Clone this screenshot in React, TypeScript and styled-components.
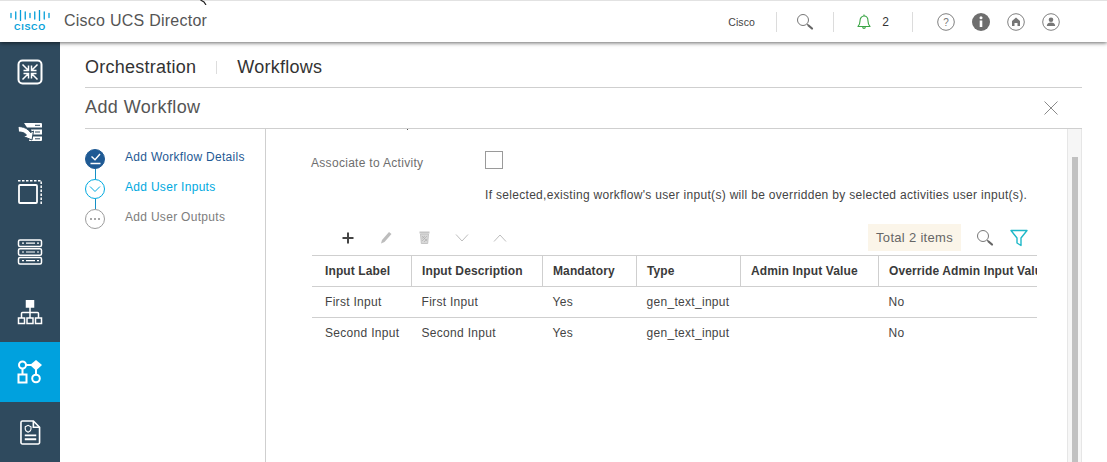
import React from "react";
import styled, { createGlobalStyle } from "styled-components";

const Global = createGlobalStyle`
  html, body { margin: 0; padding: 0; background: #fff; }
  body { font-family: "Liberation Sans", Arial, sans-serif; color: #333; overflow: hidden; }
  * { box-sizing: border-box; }
`;

const Page = styled.div`
  width: 1107px; height: 462px; display: flex; flex-direction: column; overflow: hidden; background: #fff;
`;
const Header = styled.header`
  position: relative; z-index: 2; flex: 0 0 42px; height: 42px; display: flex; align-items: center;
  background: #fff; border-top: 1px solid #e2e2e2; padding: 0 47px 0 10px;
  box-shadow: 0 1px 4px rgba(0,0,0,.6);
`;
const CursorMark = styled.svg`
  position: absolute; left: 200px; top: -1px;
`;
const Logo = styled.div`
  width: 40px; display: flex; flex-direction: column; align-items: center; margin-top: -1px;
`;
const LogoWord = styled.span`
  font: 700 9px/9px "Liberation Sans", Arial, sans-serif; letter-spacing: .7px; color: #049fd9; margin-top: 2px;
`;
const AppName = styled.div`
  margin-left: 14px; font-size: 16px; color: #555; letter-spacing: .25px; flex: 1; margin-top: -2px;
`;
const HeadUser = styled.span`
  font-size: 10.5px; color: #444; margin-right: 21px; letter-spacing: .1px;
`;
const HeadDivider = styled.span`
  width: 1px; height: 20px; background: #dcdcdc;
`;
const HeadIconSlot = styled.span<{ $w: number }>`
  width: ${(p) => p.$w}px; display: flex; align-items: center; justify-content: center; gap: 11px;
`;
const Count = styled.span`
  font-size: 12px; color: #333;
`;
const HeadIcons = styled.div`
  display: flex; align-items: center; gap: 17px; margin-left: 24px;
`;
const Body = styled.div`
  flex: 1; display: flex; min-height: 0;
`;
const Sidebar = styled.nav`
  flex: 0 0 60px; background: #2f4a5e; display: flex; flex-direction: column;
`;
const NavItem = styled.div<{ $active?: boolean }>`
  flex: 0 0 60px; display: flex; align-items: center; justify-content: center;
  background: ${(p) => (p.$active ? "#00a1de" : "transparent")};
`;
const Main = styled.main`
  flex: 1; min-width: 0; display: flex; flex-direction: column; padding: 0 25px;
`;
const Crumbs = styled.div`
  flex: 0 0 46px; display: flex; align-items: center; border-bottom: 1px solid #cfcfcf; padding-top: 5px;
  font-size: 18px; color: #333; letter-spacing: .25px;
`;
const Crumb = styled.span`
  line-height: 20px;
`;
const CrumbSep = styled.span`
  width: 1px; height: 13px; background: #ddd; margin: 0 20px;
`;
const TitleBar = styled.div`
  flex: 0 0 41px; display: flex; align-items: center; justify-content: space-between; border-bottom: 1px solid #cfcfcf;
  padding: 0 24px 0 0;
`;
const Title = styled.h1`
  margin: -2px 0 0; font-weight: 400; font-size: 18px; color: #555; letter-spacing: .4px;
`;
const Panel = styled.div`
  flex: 1; min-height: 0; display: flex;
`;
const Stepper = styled.aside`
  flex: 0 0 181px; border-right: 1px solid #cfcfcf; padding-top: 20px;
`;
const Step = styled.div`
  display: flex; height: 30px;
`;
const Marker = styled.div`
  width: 20px; display: flex; flex-direction: column; align-items: center;
`;
const Circle = styled.span<{ $kind: "done" | "current" | "todo" }>`
  flex: 0 0 20px; width: 20px; height: 20px; border-radius: 50%; display: flex; align-items: center; justify-content: center;
  background: ${(p) => (p.$kind === "done" ? "#1f5a94" : "#fff")};
  border: 1px solid ${(p) => (p.$kind === "done" ? "#1f5a94" : p.$kind === "current" ? "#00a9e0" : "#9c9c9c")};
`;
const Connector = styled.span`
  flex: 0 0 10px; width: 1px; background: #1690c6;
`;
const StepLabel = styled.span<{ $kind: "done" | "current" | "todo" }>`
  margin-left: 20px; font-size: 12px; line-height: 16px; letter-spacing: .3px;
  color: ${(p) => (p.$kind === "done" ? "#1f5a94" : p.$kind === "current" ? "#00a9e0" : "#7d7d7d")};
`;
const Content = styled.section`
  flex: 1; min-width: 0; overflow: hidden; padding: 0 30px 0 45px;
`;
const ClippedMark = styled.div`
  width: 1px; height: 1px; background: #555; margin-left: 96px;
`;
const FormRow = styled.div`
  display: flex; align-items: flex-start; margin-top: 21px;
`;
const FieldLabel = styled.label`
  width: 174px; font-size: 12px; line-height: 14px; margin-top: 5px; color: #6e6e6e; letter-spacing: .3px;
`;
const Checkbox = styled.span`
  width: 18px; height: 18px; border: 1px solid #9a9a9a; background: #fff;
`;
const Help = styled.p`
  margin: 18px 0 0 174px; font-size: 12px; line-height: 14px; color: #444; white-space: nowrap; letter-spacing: .31px;
`;
const Toolbar = styled.div`
  display: flex; align-items: center; height: 27px; margin-top: 22px; margin-right: 9px;
`;
const ToolIcon = styled.span`
  width: 38px; display: flex; align-items: center; justify-content: center;
`;
const ToolIcons = styled.div`
  display: flex; align-items: center; flex: 1; padding-left: 18px;
`;
const Chip = styled.span`
  width: 93px; height: 27px; display: flex; align-items: center; justify-content: center;
  background: #fbf5e9; font-size: 13px; color: #666; letter-spacing: .3px;
`;
const ToolRight = styled.div`
  display: flex; align-items: center; gap: 16px; margin-left: 15px;
`;
const TableWrap = styled.div`
  width: 725px; overflow: hidden; margin: 4px 0 0 1px;
`;
const Table = styled.table`
  table-layout: fixed; border-collapse: collapse; width: 790px;
`;
const Th = styled.th`
  height: 31px; padding: 0 0 0 10.5px; text-align: left; font-size: 12px; font-weight: 700; color: #3a3a3a; white-space: nowrap;
  overflow: hidden; border-top: 1px solid #cfcfcf; border-bottom: 1px solid #cfcfcf; border-right: 1px solid #cfcfcf; letter-spacing: .12px;
  &:first-child { padding-left: 13px; }
  &:last-child { border-right: 0; }
`;
const Td = styled.td`
  height: 31px; padding: 0 0 0 10.5px; font-size: 12px; color: #444; white-space: nowrap; border-bottom: 1px solid #cfcfcf; letter-spacing: .3px;
  &:first-child { padding-left: 13px; }
`;
const LastTd = styled(Td)`
  border-bottom: 0;
`;
const ScrollTrack = styled.div`
  flex: 0 0 15px; background: #f6f6f6; border-left: 1px solid #e6e6e6; border-right: 1px solid #e6e6e6; padding: 28px 3px 0 4px;
  display: flex;
`;
const ScrollThumb = styled.div`
  flex: 1; background: #c1c1c1;
`;

const CiscoBars = () => (
  <svg width="40" height="11" viewBox="0 0 40 11">
    {[3.5, 2, 0.5, 2, 3.5, 2, 0.5, 2, 3.5].map((y, i) => (
      <line key={i} x1={1 + i * 4.75} x2={1 + i * 4.75} y1={y} y2={11 - y} stroke="#049fd9" strokeWidth="1.3" strokeLinecap="round" />
    ))}
  </svg>
);

const Nav1 = () => (
  <svg width="26" height="26" viewBox="0 0 26 26" fill="none" stroke="#fff" strokeWidth="2">
    <rect x="1.500" y="1.500" width="23" height="23" rx="4" />
    <g strokeWidth="1.500">
      <path d="M5.500 5.500l6 6M11.500 6.500v5h-5M20.500 5.500l-6 6M14.500 6.500v5h5M5.500 20.500l6-6M11.500 19.500v-5h-5M20.500 20.500l-6-6M14.500 19.500v-5h5" />
    </g>
  </svg>
);
const Nav2 = () => (
  <svg width="26" height="20" viewBox="0 0 26 20">
    <g fill="#fff">
      <path d="M7 1h17a1 1 0 0 1 1 1v3.500H10z" />
      <path d="M14 7.500h11v5H16z" />
      <path d="M13 14.500h12v3.500a1 1 0 0 1-1 1H12z" />
      <path d="M1 4.500c5 0 10 2 12.500 6l3-1.500-1.500 9-8.500-3.500 3-1.500c-2-2.500-5-3-8-3z" stroke="#2f4a5e" strokeWidth="1" />
    </g>
    <g fill="#2f4a5e">
      <rect x="18" y="2.800" width="5" height="1" />
      <rect x="18" y="9.500" width="5" height="1" />
      <rect x="18" y="16.300" width="5" height="1" />
    </g>
  </svg>
);
const Nav3 = () => (
  <svg width="24" height="24" viewBox="0 0 24 24" fill="none" stroke="#fff">
    <rect x="1" y="5" width="18" height="18" rx="1" strokeWidth="1.800" />
    <path d="M0 .8H23.200V24" strokeWidth="1.500" strokeDasharray="2.500 1.500" />
  </svg>
);
const Nav4 = () => (
  <svg width="26" height="26" viewBox="0 0 26 26" fill="none" stroke="#fff">
    <rect x="1.500" y="1" width="23" height="6.500" rx="1.500" strokeWidth="1.500" />
    <rect x="1.500" y="9.700" width="23" height="6.500" rx="1.500" strokeWidth="1.500" />
    <rect x="1.500" y="18.500" width="23" height="6.500" rx="1.500" strokeWidth="1.500" />
    <path d="M5 4.200h2M9 4.200h9M20 4.200h2M5 13h2M9 13h9M20 13h2M5 21.700h2M9 21.700h9M20 21.700h2" strokeWidth="1.200" />
  </svg>
);
const Nav5 = () => (
  <svg width="26" height="25" viewBox="0 0 26 25" fill="none" stroke="#fff" strokeWidth="1.500">
    <rect x="9.500" y="0.500" width="7" height="6.500" fill="#fff" />
    <path d="M13 7v11M4.500 18v-4.500a1 1 0 0 1 1-1h15a1 1 0 0 1 1 1V18" />
    <rect x="1.500" y="18" width="6" height="5.500" />
    <rect x="10" y="18" width="6" height="5.500" />
    <rect x="18.500" y="18" width="6" height="5.500" />
  </svg>
);
const Nav6 = () => (
  <svg width="26" height="24" viewBox="0 0 26 24" fill="none" stroke="#fff" strokeWidth="2">
    <circle cx="5.500" cy="5" r="3.500" />
    <path d="M9 5h6M5.500 8.500V14M19 9v6" />
    <path d="M19 0l6 5-6 5.500-6-5.500z" fill="#fff" stroke="none" />
    <rect x="1.500" y="14.500" width="8" height="8" />
    <circle cx="19" cy="18.500" r="3.800" />
  </svg>
);
const Nav7 = () => (
  <svg width="21" height="25" viewBox="0 0 22 26" fill="none" stroke="#fff" strokeWidth="1.700">
    <path d="M2.500 1h11.500l6.500 6.500V23.500a1.500 1.500 0 0 1-1.500 1.500H2.500A1.500 1.500 0 0 1 1 23.500V2.500A1.500 1.500 0 0 1 2.500 1z" />
    <path d="M14 1v6.500h6.500" />
    <path d="M5.500 7l3-1.500 3 1.500v2.500c0 1.500-1.500 2.500-3 3.200-1.500-.7-3-1.700-3-3.200z" strokeWidth="1.200" />
    <path d="M5 16h12M5 20h12" strokeWidth="2" />
  </svg>
);

const Search = ({ size = 18 }: { size?: number }) => (
  <svg width={size} height={size} viewBox="0 0 18 18" fill="none">
    <circle cx="7" cy="7" r="5.500" stroke="#777" strokeWidth="1" />
    <path d="M11 11l1.200 1.200" stroke="#777" strokeWidth="1" />
    <path d="M12.500 12.500l3.500 3" stroke="#666" strokeWidth="2.200" strokeLinecap="round" />
  </svg>
);
const Bell = () => (
  <svg width="14" height="16" viewBox="0 0 14 16" fill="none" stroke="#3aa545" strokeWidth="1.100">
    <path d="M1 12.500c1.500-1.500 2-2.500 2-5.500 0-3 1.800-5 4-5s4 2 4 5c0 3 .5 4 2 5.500z" strokeLinejoin="round" />
    <path d="M7 .5V2M5.700 13c0 1.800 2.600 1.800 2.600 0" />
  </svg>
);
const CircleIcon = ({ children, solid }: { children: React.ReactNode; solid?: boolean }) => (
  <svg width="18" height="18" viewBox="0 0 18 18">
    <circle cx="9" cy="9" r={solid ? 9 : 8.300} fill={solid ? "#6e6e6e" : "#fff"} stroke={solid ? "none" : "#7f7f7f"} strokeWidth="1" />
    {children}
  </svg>
);
const Plus = () => (
  <svg width="12" height="12" viewBox="0 0 12 12"><path d="M6 0.500v11M0.500 6h11" stroke="#444" strokeWidth="2" /></svg>
);
const Pencil = () => (
  <svg width="13" height="13" viewBox="0 0 12 13"><path d="M0.500 12.500l1-3.500 7-8 2.500 2-7 8z" fill="#bdbdbd" /></svg>
);
const Trash = () => (
  <svg width="11" height="13" viewBox="0 0 11 13">
    <rect x="0.500" y="0.500" width="10" height="2" fill="#c4c4c4" />
    <path d="M1.500 3h8l-.8 9.500H2.300z" fill="#d8d8d8" stroke="#bbb" strokeWidth=".8" />
    <path d="M3 5l5 5M8 5l-5 5M3 7.500l3-2.500M5 11l3-3" stroke="#aaa" strokeWidth=".6" />
  </svg>
);
const Chevron = ({ up }: { up?: boolean }) => (
  <svg width="14" height="8" viewBox="0 0 14 8" fill="none" stroke="#bdbdbd" strokeWidth="1">
    <path d={up ? "M1 7.500L7 1l6 6.500" : "M1 .5L7 7l6-6.500"} />
  </svg>
);
const Funnel = () => (
  <svg width="18" height="18" viewBox="0 0 18 18" fill="none" stroke="#1fb8c8" strokeWidth="1.400">
    <path d="M1 1.500h16L11 9v7.500l-4-2.500V9z" strokeLinejoin="round" />
  </svg>
);
const Close = () => (
  <svg width="14" height="14" viewBox="0 0 14 14" stroke="#8a8a8a" strokeWidth="1"><path d="M.5.500l13 13M13.500.500l-13 13" /></svg>
);

const columns = [99, 131, 94, 104, 138, 224];
const headers = ["Input Label", "Input Description", "Mandatory", "Type", "Admin Input Value", "Override Admin Input Value"];
const rows = [
  ["First Input", "First Input", "Yes", "gen_text_input", "", "No"],
  ["Second Input", "Second Input", "Yes", "gen_text_input", "", "No"],
];
const steps = [
  { label: "Add Workflow Details", kind: "done" as const },
  { label: "Add User Inputs", kind: "current" as const },
  { label: "Add User Outputs", kind: "todo" as const },
];
const StepGlyph = ({ kind }: { kind: "done" | "current" | "todo" }) => {
  if (kind === "done")
    return (
      <svg width="13" height="12" viewBox="0 0 13 12" fill="none" stroke="#fff" strokeWidth="1.400">
        <path d="M2.500 3.500l3.500 3.300 5-5.800M1.500 10.500h10" />
      </svg>
    );
  if (kind === "current")
    return (
      <svg width="12" height="8" viewBox="0 0 12 8" fill="none" stroke="#00a9e0" strokeWidth="1">
        <path d="M1 1.500l5 5 5-5" />
      </svg>
    );
  return (
    <svg width="12" height="4" viewBox="0 0 12 4" fill="#8a8a8a">
      <circle cx="2" cy="2" r="1" /><circle cx="6" cy="2" r="1" /><circle cx="10" cy="2" r="1" />
    </svg>
  );
};

export default function App() {
  return (
    <Page>
      <Global />
      <Header>
        <CursorMark width="8" height="5" viewBox="0 0 8 5">
          <path d="M0.500 0l3.500 2 2 3" stroke="#222" strokeWidth="1.200" fill="none" />
        </CursorMark>
        <Logo>
          <CiscoBars />
          <LogoWord>CISCO</LogoWord>
        </Logo>
        <AppName>Cisco UCS Director</AppName>
        <HeadUser>Cisco</HeadUser>
        <HeadDivider />
        <HeadIconSlot $w={56}><Search /></HeadIconSlot>
        <HeadDivider />
        <HeadIconSlot $w={78}><Bell /><Count>2</Count></HeadIconSlot>
        <HeadDivider />
        <HeadIcons>
          <CircleIcon>
            <text x="9" y="12.500" textAnchor="middle" fontSize="10" fill="#777" fontFamily="Liberation Sans">?</text>
          </CircleIcon>
          <CircleIcon solid>
            <rect x="7.700" y="7.500" width="2.600" height="6.500" fill="#fff" />
            <circle cx="9" cy="4.800" r="1.500" fill="#fff" />
          </CircleIcon>
          <CircleIcon>
            <path d="M9 4.500l4 3.500v5H10.500v-3h-3v3H5V8z" fill="#777" />
          </CircleIcon>
          <CircleIcon>
            <circle cx="9" cy="6.800" r="2.300" fill="#777" />
            <path d="M4.800 13c0-2.500 2-3.500 4.200-3.500s4.200 1 4.200 3.500z" fill="#777" />
          </CircleIcon>
        </HeadIcons>
      </Header>
      <Body>
        <Sidebar>
          <NavItem><Nav1 /></NavItem>
          <NavItem><Nav2 /></NavItem>
          <NavItem><Nav3 /></NavItem>
          <NavItem><Nav4 /></NavItem>
          <NavItem><Nav5 /></NavItem>
          <NavItem $active><Nav6 /></NavItem>
          <NavItem><Nav7 /></NavItem>
        </Sidebar>
        <Main>
          <Crumbs>
            <Crumb>Orchestration</Crumb>
            <CrumbSep />
            <Crumb>Workflows</Crumb>
          </Crumbs>
          <TitleBar>
            <Title>Add Workflow</Title>
            <Close />
          </TitleBar>
          <Panel>
            <Stepper>
              {steps.map((s, i) => (
                <Step key={s.label}>
                  <Marker>
                    <Circle $kind={s.kind}><StepGlyph kind={s.kind} /></Circle>
                    {i < steps.length - 1 && <Connector />}
                  </Marker>
                  <StepLabel $kind={s.kind}>{s.label}</StepLabel>
                </Step>
              ))}
            </Stepper>
            <Content>
              <ClippedMark />
              <FormRow>
                <FieldLabel>Associate to Activity</FieldLabel>
                <Checkbox />
              </FormRow>
              <Help>If selected,existing workflow's user input(s) will be overridden by selected activities user input(s).</Help>
              <Toolbar>
                <ToolIcons>
                  <ToolIcon><Plus /></ToolIcon>
                  <ToolIcon><Pencil /></ToolIcon>
                  <ToolIcon><Trash /></ToolIcon>
                  <ToolIcon><Chevron /></ToolIcon>
                  <ToolIcon><Chevron up /></ToolIcon>
                </ToolIcons>
                <Chip>Total 2 items</Chip>
                <ToolRight>
                  <Search />
                  <Funnel />
                </ToolRight>
              </Toolbar>
              <TableWrap>
                <Table>
                  <colgroup>
                    {columns.map((w, i) => <col key={i} style={{ width: w }} />)}
                  </colgroup>
                  <thead>
                    <tr>{headers.map((h) => <Th key={h}>{h}</Th>)}</tr>
                  </thead>
                  <tbody>
                    {rows.map((r, i) => (
                      <tr key={i}>
                        {r.map((c, j) => (i === rows.length - 1 ? <LastTd key={j}>{c}</LastTd> : <Td key={j}>{c}</Td>))}
                      </tr>
                    ))}
                  </tbody>
                </Table>
              </TableWrap>
            </Content>
            <ScrollTrack><ScrollThumb /></ScrollTrack>
          </Panel>
        </Main>
      </Body>
    </Page>
  );
}
